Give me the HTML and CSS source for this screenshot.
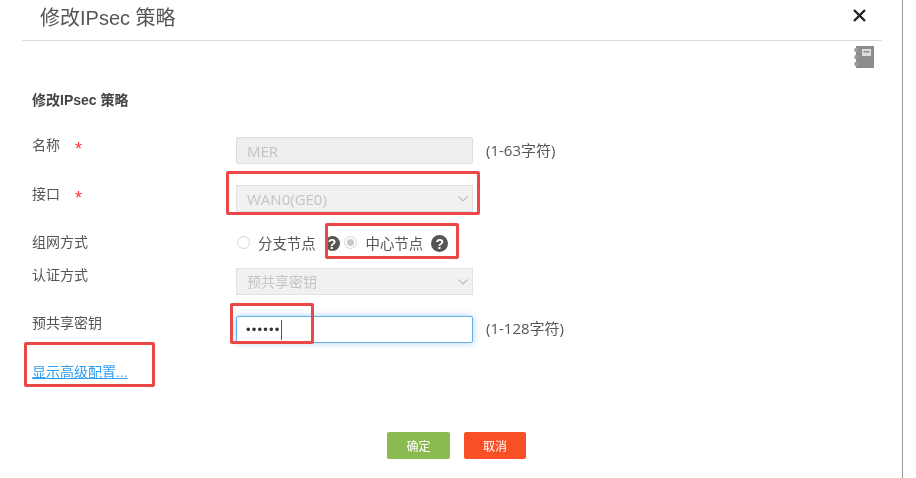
FILE: index.html
```html
<!DOCTYPE html>
<html>
  <head>
    <meta charset="utf-8">
    <meta name="viewport" content="width=device-width, initial-scale=1">
    <title>修改IPsec 策略</title>
    <link rel="stylesheet" href="styles.css">
  </head>
  <body>
    <div class="dialog">
      <header class="dialog-head">
        <h1>修改IPsec 策略</h1>
        <svg class="close" width="15" height="15" viewBox="0 0 15 15"><path d="M2 2l11 11M13 2L2 13" stroke="#222" stroke-width="2.4" fill="none"/></svg>
      </header>
      <div class="tools">
        <svg width="20" height="22" viewBox="0 0 20 22">
          <rect x="2" y="0" width="18" height="22" fill="#8c8c8c"/>
          <rect x="8" y="3" width="9" height="7" fill="#dcdcdc"/>
          <rect x="9.5" y="5" width="6" height="1.5" fill="#8c8c8c"/>
          <circle cx="2.5" cy="4" r="2.3" fill="#9a9a9a"/>
          <circle cx="2.5" cy="11" r="2.3" fill="#9a9a9a"/>
          <circle cx="2.5" cy="18" r="2.3" fill="#9a9a9a"/>
        </svg>
      </div>
      <form class="form">
        <h2>修改IPsec 策略</h2>
        <div class="row row-name">
          <label>名称<span class="req">*</span></label>
          <input class="control control-latin" type="text" value="MER" disabled>
          <span class="hint">(1-63字符)</span>
        </div>
        <div class="row row-iface">
          <label>接口<span class="req">*</span></label>
          <div class="select">
            <select class="control control-latin" disabled><option>WAN0(GE0)</option></select>
            <svg class="chevron" width="10" height="6" viewBox="0 0 10 6"><path d="M.5.5l4.500 4.500L9.500.5" stroke="#bbb" stroke-width="1.1" fill="none"/></svg>
          </div>
        </div>
        <div class="row row-mode">
          <label>组网方式</label>
          <div class="radios">
            <span class="radio"></span><span class="radio-text">分支节点</span>
            <span class="help help-a">?</span>
            <span class="radio radio-on"></span><span class="radio-text">中心节点</span>
            <span class="help help-b">?</span>
          </div>
        </div>
        <div class="row row-auth">
          <label>认证方式</label>
          <div class="select">
            <select class="control" disabled><option>预共享密钥</option></select>
            <svg class="chevron" width="10" height="6" viewBox="0 0 10 6"><path d="M.5.5l4.500 4.500L9.500.5" stroke="#bbb" stroke-width="1.1" fill="none"/></svg>
          </div>
        </div>
        <div class="row row-key">
          <label>预共享密钥</label>
          <div class="control control-focus"><span class="dots">••••••</span><span class="caret"></span></div>
          <span class="hint">(1-128字符)</span>
        </div>
        <a class="advanced" href="#">显示高级配置...</a>
        <div class="actions">
          <button type="button" class="btn btn-ok">确定</button>
          <button type="button" class="btn btn-cancel">取消</button>
        </div>
      </form>
      <!-- red marks drawn over the screenshot -->
      <div class="mark mark-iface"></div>
      <div class="mark mark-mode"></div>
      <div class="mark mark-key"></div>
      <div class="mark mark-link"></div>
    </div>
  </body>
</html>
```

FILE: styles.css
```css
html, body { margin: 0; padding: 0; height: 100%; overflow: hidden; background: #fff; }
body { font-family: "Liberation Sans", "Noto Sans CJK SC", sans-serif; font-size: 14px; color: #555; }

.dialog { position: relative; box-sizing: border-box; width: 903px; height: 478px; border-right: 1px solid #999; filter: blur(.35px); }

.dialog-head { display: flex; justify-content: space-between; align-items: center; box-sizing: border-box; height: 41px; margin: 0 20px 0 22px; padding: 0 15px 0 18px; border-bottom: 1px solid #ddd; }
.dialog-head h1 { margin: 0 0 5px; font-size: 20px; font-weight: normal; line-height: 30px; color: #555; }
.close { display: block; margin-bottom: 10px; }

.tools { display: flex; justify-content: flex-end; height: 22px; margin: 5px 28px 0 0; }

.form { padding: 0 0 0 32px; }
.form h2 { margin: 22px 0 25px; font-size: 14px; line-height: 20px; color: #444; }

.row { display: flex; align-items: flex-start; }
.row label { width: 204px; flex: none; line-height: 20px; }
.req { display: inline-block; margin-left: 15px; color: #f33; font-size: 18px; line-height: 14px; vertical-align: -5px; }
.hint { margin: 5px 0 0 13px; font-family: "Open Sans", "Noto Sans CJK SC", sans-serif; font-size: 15px; line-height: 20px; }

.control { box-sizing: border-box; display: block; width: 237px; height: 27px; margin: 0; padding: 0 10px; font: inherit; color: #c4c4c4; background: #eee; border: 1px solid #ddd; border-radius: 2px; }
.control-latin { font-family: "Open Sans", "Noto Sans CJK SC", sans-serif; font-size: 15px; }
select.control { appearance: none; background: #f1f1f1; border-color: #e2e2e2; border-radius: 0; opacity: 1; }
.select { position: relative; }
.chevron { position: absolute; right: 5px; top: 11px; }

.row-name input { margin-top: 2px; }
.row-iface { margin-top: 20px; }
.row-iface .select { margin-top: 1px; }
.row-mode { margin-top: 20px; height: 20px; }
.row-auth { margin-top: 13px; }
.row-auth .select { margin-top: 3px; }
.row-key { margin-top: 18px; }

.radios { display: flex; align-items: center; height: 20px; padding-left: 1px; }
.radio { box-sizing: border-box; width: 13px; height: 13px; flex: none; border: 1px solid #d4d4d4; border-radius: 50%; background: #fff; }
.radio-on { position: relative; margin-left: 4px; }
.radio-on::after { content: ""; position: absolute; left: 2px; top: 2px; width: 7px; height: 7px; border-radius: 50%; background: #c8c8c8; }
.radio-text { margin-left: 8px; font-size: 14.4px; }
.radio-on + .radio-text { margin-left: 9px; }
.help { display: flex; align-items: center; justify-content: center; flex: none; border-radius: 50%; background: #555; color: #fff; font-weight: bold; font-size: 14px; }
.help-a { width: 15px; height: 15px; margin: 3px 0 0 9px; }
.help-b { width: 17px; height: 17px; margin: 3px 0 0 8px; }

.control-focus { display: flex; align-items: center; margin-top: 3px; padding: 0 9px; color: #333; background: #fff; border-color: #66afe9; box-shadow: 0 0 6px rgba(102, 175, 233, .6); }
.dots { letter-spacing: 1.2px; font-size: 13px; }
.caret { width: 1px; height: 20px; background: #555; }

.advanced { display: inline-block; margin-top: 19px; line-height: 20px; color: #2f9ef0; text-decoration: underline; }

.actions { display: flex; justify-content: flex-start; gap: 14px; margin: 50px 0 0 355px; }
.btn { width: 63px; height: 27px; padding: 0; border: none; border-radius: 2px; color: #fff; font: inherit; font-size: 12px; }
.btn-ok { background: #8bbb50; }
.btn-cancel { width: 62px; background: #f94f25; }

.mark { position: absolute; box-sizing: border-box; border: 3px solid #ec4747; border-radius: 2px; }
.mark-iface { left: 226px; top: 171px; width: 254px; height: 44px; }
.mark-mode { left: 325px; top: 223px; width: 134px; height: 36px; }
.mark-key { left: 230px; top: 303px; width: 84px; height: 41px; }
.mark-link { left: 24px; top: 342px; width: 131px; height: 45px; }
```
